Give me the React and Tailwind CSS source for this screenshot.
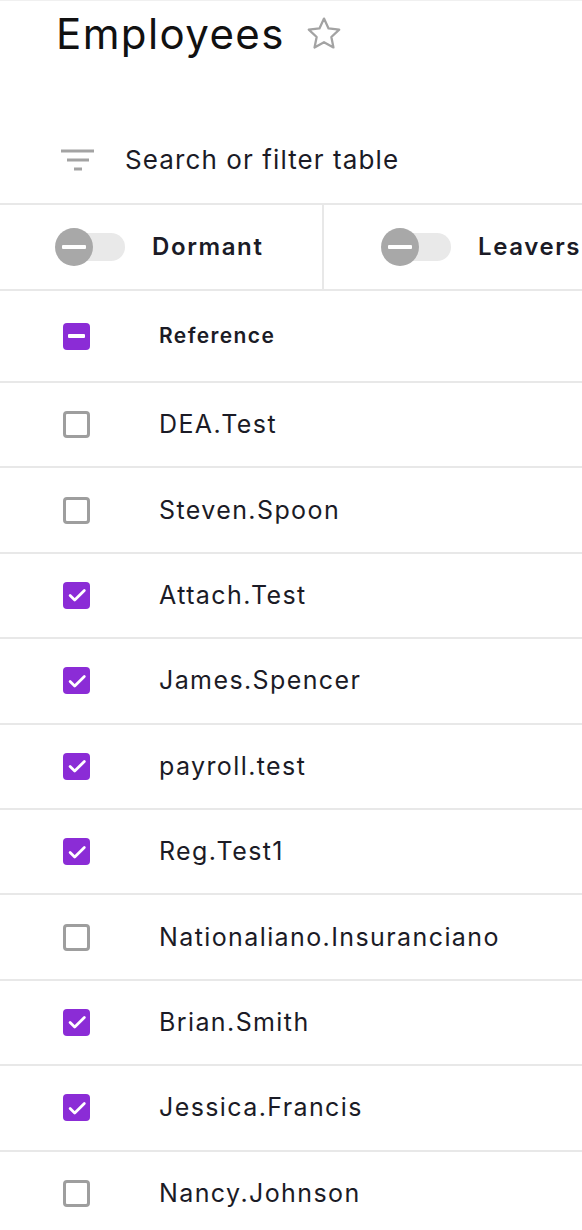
import { useState } from "react";

const rows = [
  { name: "DEA.Test", checked: false },
  { name: "Steven.Spoon", checked: false },
  { name: "Attach.Test", checked: true },
  { name: "James.Spencer", checked: true },
  { name: "payroll.test", checked: true },
  { name: "Reg.Test1", checked: true },
  { name: "Nationaliano.Insuranciano", checked: false },
  { name: "Brian.Smith", checked: true },
  { name: "Jessica.Francis", checked: true },
  { name: "Nancy.Johnson", checked: false },
];

function Checkbox({ state }) {
  if (state === "checked") {
    return (
      <span className="flex h-[27px] w-[27px] items-center justify-center rounded-[4px] bg-[#8b2cd6]">
        <svg viewBox="0 0 24 24" className="h-[22px] w-[22px]" fill="none" stroke="white" strokeWidth="3" strokeLinecap="round" strokeLinejoin="round">
          <path d="M4.5 12.5l5 5L20 7" />
        </svg>
      </span>
    );
  }
  if (state === "mixed") {
    return (
      <span className="flex h-[27px] w-[27px] items-center justify-center rounded-[4px] bg-[#8b2cd6]">
        <span className="h-[4px] w-[17px] rounded-[1px] bg-white" />
      </span>
    );
  }
  return <span className="block h-[27px] w-[27px] rounded-[4px] border-[3px] border-[#9e9e9e] bg-white" />;
}

function Toggle() {
  return (
    <span className="relative flex h-[38px] w-[70px] items-center">
      <span className="absolute left-[10px] right-0 h-[28px] rounded-full bg-[#e9e9e9]" />
      <span className="relative flex h-[38px] w-[38px] items-center justify-center rounded-full bg-[#a8a8a8]">
        <span className="h-[4px] w-[24px] rounded-[1px] bg-white" />
      </span>
    </span>
  );
}

export default function App() {
  const [items] = useState(rows);

  return (
    <div className="h-[1230px] w-[582px] overflow-hidden border-t border-[#f0f0f0] bg-white font-['Inter',sans-serif] text-[#1b1b26]">
      <div className="flex h-[66px] items-center gap-[18px] pl-[56px]">
        <h1 className="text-[42px] font-normal leading-none tracking-[1.4px] text-[#111]">Employees</h1>
        <svg viewBox="0 0 24 24" className="h-[42px] w-[42px]" fill="none" stroke="#a3a3a3" strokeWidth="1.3" strokeLinejoin="round">
          <path d="M12 3.2l2.6 5.6 6.1.7-4.5 4.2 1.2 6L12 16.7l-5.4 3 1.2-6-4.5-4.2 6.1-.7z" />
        </svg>
      </div>

      <div className="flex h-[136px] items-center gap-[29px] pl-[60px] pt-[50px]">
        <svg viewBox="0 0 36 24" className="h-[24px] w-[36px]" fill="none" stroke="#a3a3a3" strokeWidth="3">
          <path d="M1 3h33M7 12h22M14 21h8" />
        </svg>
        <span className="text-[26px] leading-none tracking-[1.1px]">Search or filter table</span>
      </div>

      <div className="flex h-[88px] border-y-2 border-[#e8e8e8]">
        <div className="flex w-[324px] items-center gap-[27px] border-r-2 border-[#e8e8e8] pl-[55px]">
          <Toggle />
          <span className="text-[24px] font-semibold tracking-[1.6px]">Dormant</span>
        </div>
        <div className="flex flex-1 items-center gap-[27px] pl-[57px]">
          <Toggle />
          <span className="text-[24px] font-semibold tracking-[1.6px]">Leavers</span>
        </div>
      </div>

      <div className="flex h-[92px] items-center border-b-2 border-[#e8e8e8] pl-[63px]">
        <Checkbox state="mixed" />
        <span className="pl-[69px] text-[21px] font-semibold tracking-[1.4px]">Reference</span>
      </div>

      {items.map((row) => (
        <div key={row.name} className="flex h-[85.4px] items-center border-b-2 border-[#e8e8e8] pl-[63px]">
          <Checkbox state={row.checked ? "checked" : "empty"} />
          <span className="pl-[69px] text-[25px] leading-none tracking-[1.4px]">{row.name}</span>
        </div>
      ))}
    </div>
  );
}
